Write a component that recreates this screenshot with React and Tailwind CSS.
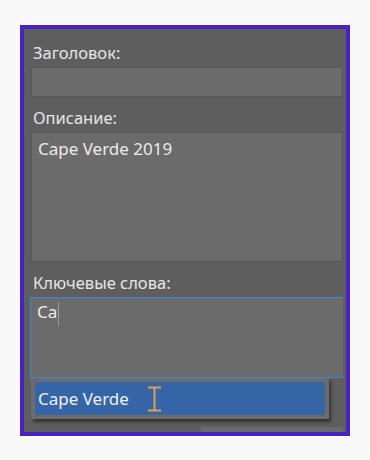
const Label = ({ children }) => (
  <div className="text-[16.5px] leading-[20px] text-[#e6e6e6] pl-[2px]">{children}</div>
)

const App = () => {
  return (
    <div className="w-[370px] h-[460px] bg-[#f9f9f9] pt-[25px] pl-[20px]" style={{ fontFamily: '"Noto Sans", "Open Sans", sans-serif' }}>
      <div className="relative flex flex-col w-[330px] h-[411px] border-[4px] border-[#4a22c4] bg-[#5e5e5e] pl-[7px] pr-[3px] pt-[14px]">
        <Label>Заголовок:</Label>
        <div className="mt-[4px] h-[30px] bg-[#6b6b6b] border border-[#585858] rounded-[1px]" />

        <div className="mt-[11px]">
          <Label>Описание:</Label>
        </div>
        <div className="mt-[4px] h-[130px] bg-[#6b6b6b] border border-[#585858] rounded-[1px] px-[6px] pt-[5px] text-[17px] leading-[22px] text-[#ececec]">
          Cape Verde 2019
        </div>

        <div className="mt-[11px]">
          <Label>Ключевые слова:</Label>
        </div>
        <div className="mt-[4px] -ml-[1px] h-[81px] bg-[#6b6b6b] border border-[#3d88d6] border-r-0 px-[6px] pt-[3px] text-[17px] leading-[22px] text-[#ececec] flex items-start">
          <span>Ca</span>
          <span className="ml-[1px] mt-[1px] w-[1px] h-[24px] bg-[#9a9a9a]" />
        </div>

        <div className="mt-auto self-end w-[142px] h-[5px] bg-[#6a6a6a]" />

        <div className="absolute left-[7px] top-[349px] w-[298px] h-[41px] bg-[#6c6c6c] p-[4px] shadow-[2px_3px_3px_rgba(0,0,0,0.45)]">
          <div className="h-full bg-[#3565a7] flex items-center pl-[3px] text-[17px] text-[#eef2f8]">
            <span>Cape Verde</span>
            <svg className="ml-[18px]" width="15" height="26" viewBox="0 0 15 26">
              <path d="M1 1.5H14M1 24.5H14M7.5 1.5V24.5" stroke="#e0a050" strokeWidth="2" fill="none" />
            </svg>
          </div>
        </div>
      </div>
    </div>
  )
}

export default App
